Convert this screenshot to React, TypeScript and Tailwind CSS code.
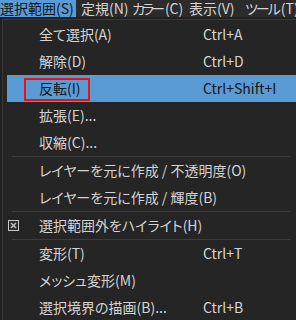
import React from "react";

type Item =
  | { type: "item"; label: string; shortcut?: string; active?: boolean; check?: boolean }
  | { type: "sep" };

const items: Item[] = [
  { type: "item", label: "全て選択(A)", shortcut: "Ctrl+A" },
  { type: "item", label: "解除(D)", shortcut: "Ctrl+D" },
  { type: "item", label: "反転(I)", shortcut: "Ctrl+Shift+I", active: true },
  { type: "item", label: "拡張(E)..." },
  { type: "item", label: "収縮(C)..." },
  { type: "sep" },
  { type: "item", label: "レイヤーを元に作成 / 不透明度(O)" },
  { type: "item", label: "レイヤーを元に作成 / 輝度(B)" },
  { type: "sep" },
  { type: "item", label: "選択範囲外をハイライト(H)", check: true },
  { type: "sep" },
  { type: "item", label: "変形(T)", shortcut: "Ctrl+T" },
  { type: "item", label: "メッシュ変形(M)" },
  { type: "item", label: "選択境界の描画(B)...", shortcut: "Ctrl+B" },
];

function CheckIcon() {
  return (
    <svg width="11" height="11" viewBox="0 0 11 11" className="block">
      <rect x="0.5" y="0.5" width="10" height="10" fill="#2a2a2a" stroke="#c8c8c8" strokeWidth="1" />
      <path d="M3 3 L8 8 M8 3 L3 8" stroke="#bdbdbd" strokeWidth="1.6" />
    </svg>
  );
}

export default function App() {
  return (
    <div
      className="w-[296px] h-[320px] overflow-hidden bg-[#202020] text-[14px] text-[#d4d4d4] [font-feature-settings:'palt']"
      style={{ fontFamily: '"Noto Sans CJK JP", "Noto Sans", sans-serif' }}
    >
      <div className="flex h-[17px] items-center bg-[#2b2b2b] leading-[17px] whitespace-nowrap">
        <div className="h-[17px] w-[76px] shrink-0 bg-[#5b9bd5] text-[#141414]">選択範囲(S)</div>
        <div className="w-[56px] shrink-0 pl-[5px]">定規(N)</div>
        <div className="w-[57px] shrink-0">
          <span className="tracking-[-3px]">カラー</span>
          <span className="pl-[3px]">(C)</span>
        </div>
        <div className="w-[56px] shrink-0">表示(V)</div>
        <div className="shrink-0">
          <span className="tracking-[-2px]">ツール</span>
          <span className="pl-[2px]">(T)</span>
        </div>
      </div>
      <div className="ml-[2px] mt-[2px] h-[320px] border-l border-t border-[#3a3a3a] bg-[#252525] pt-[1px]">
        {items.map((it, i) =>
          it.type === "sep" ? (
            <div key={i} className="ml-[9px] mr-[5px] h-[1px] bg-[#3c3c3c]" />
          ) : (
            <div
              key={i}
              className={
                "relative ml-[4px] flex h-[27px] items-center whitespace-nowrap " +
                (it.active ? "bg-[#5b9bd5] text-[#161616]" : "")
              }
            >
              <div className="flex w-[32px] shrink-0 items-center pl-[1px]">
                {it.check ? <CheckIcon /> : null}
              </div>
              <div className="w-[164px] shrink-0">{it.label}</div>
              <div>{it.shortcut ?? ""}</div>
              {it.active ? (
                <div className="absolute left-[17px] top-[3px] h-[23px] w-[66px] border-2 border-[#ee1111]" />
              ) : null}
            </div>
          )
        )}
      </div>
    </div>
  );
}
